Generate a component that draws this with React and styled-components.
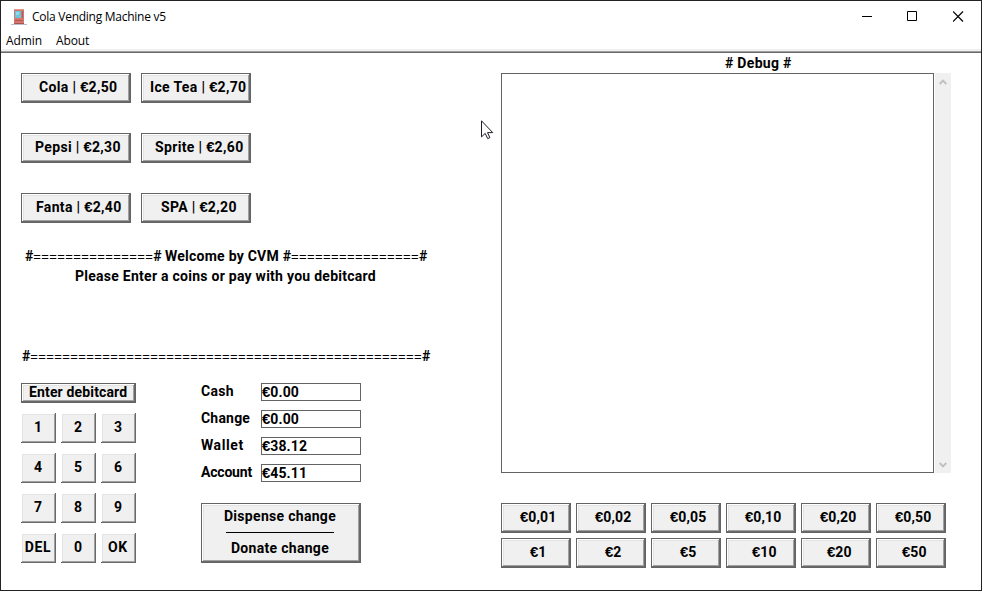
import React from "react";
import styled, { createGlobalStyle, css } from "styled-components";

const GlobalStyle = createGlobalStyle`
  *, *::before, *::after { box-sizing: border-box; }
  html, body { margin: 0; padding: 0; background: #fff; overflow: hidden; }
  button { margin: 0; border: 0; border-radius: 0; color: #000; cursor: default; }
`;

const systemFont = css`
  font-family: Roboto, "Liberation Sans", sans-serif;
  font-size: 14px;
  font-weight: 700;
  line-height: 20px;
  white-space: pre;
`;

const Window = styled.div`
  width: 982px;
  height: 591px;
  display: flex;
  flex-direction: column;
  border: 1px solid #242226;
  background: #fff;
  color: #000;
`;

const TitleBar = styled.header`
  height: 31px;
  display: flex;
  align-items: center;
  padding-left: 10px;
  gap: 5px;
  font: 12px "Open Sans", sans-serif;
`;

const Title = styled.span`
  flex: 1;
  letter-spacing: -0.26px;
`;

const Controls = styled.div`
  display: flex;
  height: 31px;
`;

const Control = styled.button`
  width: 45.5px;
  padding: 0;
  display: flex;
  align-items: center;
  justify-content: center;
  background: transparent;
`;

const MenuBar = styled.nav`
  height: 21px;
  display: flex;
  gap: 14px;
  padding: 0 5px;
  font: 12px/18px "Open Sans", sans-serif;
  letter-spacing: -0.1px;
  box-shadow: inset 0 -1px #696969, inset 0 -2px #a0a0a0, inset 0 -4px #f0f0f0;
`;

const Content = styled.main`
  flex: 1;
  display: grid;
  grid-template-columns: 480px 450px;
  padding-left: 20px;
  ${systemFont}
`;

const LeftPane = styled.section`
  padding-top: 20px;
`;

const RightPane = styled.section`
  display: flex;
  flex-direction: column;
`;

const raised = css`
  box-shadow: inset -1px -1px #696969, inset 1px 1px #fff,
    inset -2px -2px #a0a0a0, inset 2px 2px #e3e3e3;
`;

const framed = css`
  border: 1px solid #646464;
  ${raised}
`;

const PushButton = styled.button`
  ${systemFont}
  ${framed}
  width: ${(p) => p.$width}px;
  height: ${(p) => p.$height || 30}px;
  display: flex;
  align-items: center;
  padding: 0 0 2px ${(p) => p.$indent}px;
  background: #f0f0f0;
  letter-spacing: ${(p) => p.$spacing ?? 0.3}px;
`;

const Drinks = styled.div`
  display: grid;
  grid-template-columns: 110px 110px;
  gap: 30px 10px;
`;

const Euro = styled.span`
  font: 700 15px/16px "Liberation Sans", sans-serif;
  letter-spacing: 0;
`;

const Display = styled.div`
  height: 120px;
  margin-top: 23px;
`;

const DisplayLine = styled.div`
  height: 20px;
  padding-left: ${(p) => p.$indent}px;
  margin-top: ${(p) => p.$gap || 0}px;
  letter-spacing: ${(p) => p.$spacing || 0}px;
`;

const Rule = styled.span`
  font: 400 13px/16px "Liberation Sans", sans-serif;
  letter-spacing: 0.4px;
`;

const Welcome = styled.span`
  letter-spacing: 0.25px;
`;

const PaymentPanel = styled.div`
  display: grid;
  grid-template-columns: 115px 160px;
  column-gap: 65px;
  margin-top: 17px;
`;

const CardPanel = styled.div`
  display: flex;
  flex-direction: column;
  gap: 10px;
`;

const Keypad = styled.div`
  display: grid;
  grid-template-columns: repeat(3, 35px);
  gap: 10px 5px;
`;

const Key = styled.button`
  ${systemFont}
  ${raised}
  height: 30px;
  padding: 0 1px 2px 0;
  display: flex;
  align-items: center;
  justify-content: center;
  background: #f0f0f0;
  letter-spacing: ${(p) => p.$spacing || 0}px;
`;

const Balances = styled.div`
  display: flex;
  flex-direction: column;
  gap: 9px;
  height: 120px;
`;

const Balance = styled.div`
  display: grid;
  grid-template-columns: 60px 100px;
  grid-template-rows: 18px;
`;

const BalanceLabel = styled.span`
  line-height: 17px;
  letter-spacing: ${(p) => p.$spacing}px;
`;

const BalanceValue = styled.span`
  border: 1px solid #646464;
  line-height: 16px;
  letter-spacing: 0.1px;
`;

const ChangeButton = styled.button`
  ${systemFont}
  ${framed}
  width: 160px;
  height: 60px;
  padding: 2px 2px 0 0;
  display: flex;
  flex-direction: column;
  align-items: center;
  background: #f0f0f0;
  letter-spacing: 0.3px;
`;

const Divider = styled.span`
  width: 108px;
  height: 1px;
  margin: 6px 0 5px;
  background: #000;
`;

const DebugTitle = styled.div`
  height: 20px;
  padding-left: 224px;
  letter-spacing: 0.3px;
`;

const DebugArea = styled.div`
  height: 400px;
  display: grid;
  grid-template-columns: 433px 16px;
  column-gap: 1px;
`;

const DebugLog = styled.div`
  border: 1px solid #646464;
`;

const ScrollBar = styled.div`
  display: flex;
  flex-direction: column;
  justify-content: space-between;
  align-items: center;
  padding: 6px 1px 5px 0;
  background: #f0f0f0;
`;

const Coins = styled.div`
  display: grid;
  grid-template-columns: repeat(6, 70px);
  gap: 5px;
  margin-top: 30px;
`;

const Cursor = styled.svg`
  position: absolute;
  left: 481px;
  top: 120px;
`;

const drinks = [
  ["Cola | ", "2,50", 17],
  ["Ice Tea | ", "2,70", 8],
  ["Pepsi | ", "2,30", 13],
  ["Sprite | ", "2,60", 13],
  ["Fanta | ", "2,40", 14],
  ["SPA | ", "2,20", 19],
];

const keys = ["1", "2", "3", "4", "5", "6", "7", "8", "9", "DEL", "0", "OK"];
const keySpacing = { DEL: 0.7, OK: 0.6 };

const balances = [
  ["Cash", "0.00", 0.3],
  ["Change", "0.00", 0.2],
  ["Wallet", "38.12", 0.6],
  ["Account", "45.11", -0.2],
];

const coins = [
  ["0,01", 18], ["0,02", 18], ["0,05", 18], ["0,10", 18], ["0,20", 18], ["0,50", 18],
  ["1", 28], ["2", 28], ["5", 28], ["10", 25], ["20", 25], ["50", 25],
];

function Price({ children }) {
  return (
    <span>
      <Euro>€</Euro>
      {children}
    </span>
  );
}

function MachineIcon() {
  return (
    <svg width="16" height="16" viewBox="0 0 16 16" shapeRendering="crispEdges">
      <path d="M0 15h16v1H0z" fill="#b9bccb" />
      <path d="M3 0h10v15H3z" fill="#d4766b" />
      <path d="M3 0h10v1H3z" fill="#e39a8c" />
      <path d="M4 2h6v7H4z" fill="#67c5dc" />
      <path d="M5 3h3v3H5z" fill="#8bdcec" />
      <path d="M11 2h1v7h-1z" fill="#b55a54" />
      <path d="M4 11h8v1H4z" fill="#b55650" />
      <path d="M3 14h10v1H3z" fill="#a9544e" />
    </svg>
  );
}

function ScrollArrow({ down }) {
  return (
    <svg width="8" height="6" viewBox="0 0 8 6">
      <path
        d={down ? "M0.7 1 4 4.3 7.3 1" : "M0.7 5 4 1.7 7.3 5"}
        fill="none"
        stroke="#bfbfbf"
        strokeWidth="1.9"
      />
    </svg>
  );
}

export default function App() {
  return (
    <>
      <GlobalStyle />
      <Window>
        <TitleBar>
          <MachineIcon />
          <Title>Cola Vending Machine v5</Title>
          <Controls>
            <Control aria-label="Minimize">
              <svg width="11" height="11"><path d="M0 5.5h10" stroke="#000" /></svg>
            </Control>
            <Control aria-label="Maximize">
              <svg width="11" height="11"><path d="M.5.5h9v9h-9z" fill="none" stroke="#000" /></svg>
            </Control>
            <Control aria-label="Close">
              <svg width="11" height="11"><path d="M0 .5l10 10M10 .5l-10 10" stroke="#000" strokeWidth="1.2" /></svg>
            </Control>
          </Controls>
        </TitleBar>
        <MenuBar>
          <span>Admin</span>
          <span>About</span>
        </MenuBar>
        <Content>
          <LeftPane>
            <Drinks>
              {drinks.map(([name, price, indent]) => (
                <PushButton key={name} $width={110} $indent={indent} $spacing={0.35}>
                  {name}
                  <Price>{price}</Price>
                </PushButton>
              ))}
            </Drinks>
            <Display>
              <DisplayLine $indent={4}>
                #<Rule>{"=".repeat(15)}</Rule># <Welcome>Welcome by CVM </Welcome>
                #<Rule>{"=".repeat(16)}</Rule>#
              </DisplayLine>
              <DisplayLine $indent={54} $spacing={0.26}>
                Please Enter a coins or pay with you debitcard
              </DisplayLine>
              <DisplayLine $indent={1} $gap={60}>
                #<Rule>{"=".repeat(49)}</Rule>#
              </DisplayLine>
            </Display>
            <PaymentPanel>
              <CardPanel>
                <PushButton $width={115} $height={20} $indent={7} $spacing={0.15}>
                  Enter debitcard
                </PushButton>
                <Keypad>
                  {keys.map((k) => (
                    <Key key={k} $spacing={keySpacing[k]}>{k}</Key>
                  ))}
                </Keypad>
              </CardPanel>
              <div>
                <Balances>
                  {balances.map(([label, value, spacing]) => (
                    <Balance key={label}>
                      <BalanceLabel $spacing={spacing}>{label}</BalanceLabel>
                      <BalanceValue><Price>{value}</Price></BalanceValue>
                    </Balance>
                  ))}
                </Balances>
                <ChangeButton>
                  <span>Dispense change</span>
                  <Divider />
                  <span>Donate change</span>
                </ChangeButton>
              </div>
            </PaymentPanel>
          </LeftPane>
          <RightPane>
            <DebugTitle># Debug #</DebugTitle>
            <DebugArea>
              <DebugLog />
              <ScrollBar>
                <ScrollArrow />
                <ScrollArrow down />
              </ScrollBar>
            </DebugArea>
            <Coins>
              {coins.map(([value, indent]) => (
                <PushButton key={value} $width={70} $indent={indent} $spacing={0.1}>
                  <Price>{value}</Price>
                </PushButton>
              ))}
            </Coins>
          </RightPane>
        </Content>
      </Window>
      <Cursor width="13" height="20" viewBox="0 0 13 20">
        <path
          d="M.5.8v16.1l3.7-3.5 2.5 5.2 2.2-1-2.4-5h5.2z"
          fill="#fff"
          stroke="#1c1c2c"
        />
      </Cursor>
    </>
  );
}
